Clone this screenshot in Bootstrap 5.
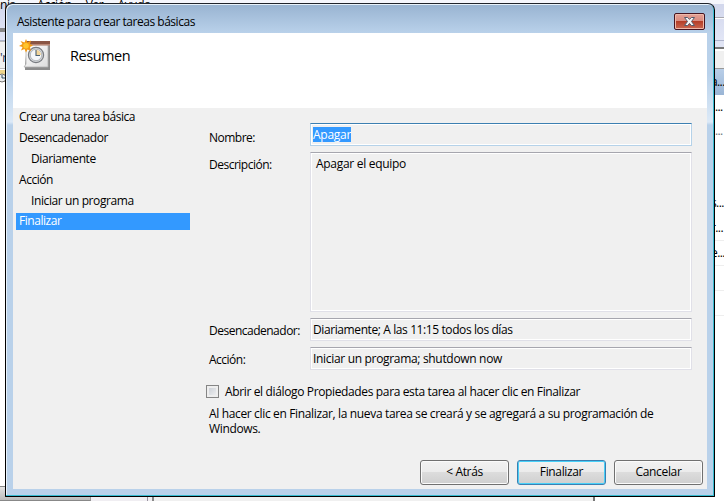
<!DOCTYPE html>
<html lang="es">
<head>
<meta charset="utf-8">
<meta name="viewport" content="width=device-width, initial-scale=1">
<title>Asistente para crear tareas básicas</title>
<link href="https://cdn.jsdelivr.net/npm/bootstrap@5.3.0/dist/css/bootstrap.min.css" rel="stylesheet">
<style>
body{width:724px;height:501px;font-family:"Open Sans","Noto Sans",sans-serif;font-size:12px;line-height:16px;letter-spacing:-.35px;color:#000;background:#fff}
.desktop{width:724px;height:501px}
.back-menu{height:4px;background:#f5f6fc;gap:14px}
.back-menu span{line-height:16px;margin-top:-3px;height:16px}
.back-tools{height:37px;background:linear-gradient(#d2d7ec,#e2e6f6);border-bottom:1px solid #aeb4cc}
.back-left{left:0;top:41px;width:5px;height:460px}
.back-left .lbl{height:28px;background:#f0f0f0;border-top:1px solid #bbb;border-bottom:1px solid #bbb;padding-top:8px;color:#203050}
.grip{left:0;top:28px;width:6px;height:4px;background:#888}
.ridge{left:715px;top:17px;width:9px;height:2px;background:#a8a8b0;border-bottom:1px solid #fff}
.back-right{left:715px;top:41px;width:9px;height:460px}
.back-right .hd{height:28px;background:#f0f0f0;border-bottom:1px solid #999;box-shadow:inset 0 6px #e0e4f4,inset 0 8px #777,inset 0 10px #fff}
.back-right .sel{height:26px;background:linear-gradient(#b8cee8,#9ab5d5);padding-top:5px}
.back-right .rw{height:25px;padding-top:4px}
.back-right .short{height:24px}
.back-right .line{border-bottom:1px solid #eee}
.back-right div{letter-spacing:-.6px;text-indent:-4px}
.back-right .dots{text-indent:0}
.back-foot{left:0;top:486px;width:724px;height:15px;background:#f0eef2}
.back-foot .bar{width:91px;background:linear-gradient(#e3e3e3,#bbb);border-top:1px solid #888;border-right:1px solid #999;border-bottom:1px solid #888}
.back-foot .mid{width:57px;border-right:1px solid #99939f}
.back-foot .mid2{width:6px;border-right:2px solid #888}
.back-foot .mid3{width:441px;border-right:2px solid #777;background:#f0f0f0}
.back-foot .rest{background:#fff}
.wizard{left:5px;top:3px;width:710px;height:494px;border:1px solid #000;border-top-color:#20242c;border-radius:7px 7px 1px 1px;background:linear-gradient(#98b3d1 0,#b9d1ea 29px,#b9d1ea 70px,#dce9f7 118px,#b9d1ea 121px);box-shadow:inset -1px -1px #37bbd0,inset 1px 1px #e8f2fb;padding:0 7px 7px 7px}
.caption{height:29px;padding:9px 1px 0 4px}
.caption span{letter-spacing:-.47px;margin-top:1px}
.closer{width:31px;height:17px;border:1px solid #461420;border-radius:2px;box-shadow:inset 0 0 0 1px #efb9aa;background:linear-gradient(#e5a196 0,#da8c80 45%,#b53e28 50%,#ca6851 100%);margin-right:1px}
.banner{height:75px;background:#fff;padding:6px 0 0 6px}
.banner h1{font-size:14.5px;font-weight:400;line-height:20px;letter-spacing:-.45px;margin:7px 0 0 17px}
.sheet{height:381px;background:#f0f0f0}
.steps{width:177px;padding:0 0 0 3px}
.steps div{height:17px;line-height:17px;margin-bottom:4px;padding-left:3px;letter-spacing:-.45px}
.steps .deep{padding-left:15px;letter-spacing:-.4px}
.steps .on{background:#39f;color:#fff;line-height:16px}
.details{width:498px;margin-left:19px;padding-top:15px}
.entry{margin-bottom:6px}
.field-label{width:101px;padding-top:5px;letter-spacing:-.5px}
.field-label.low{padding-top:7px}
.field{width:382px;height:23px;border:1px solid #e0e0e8;border-top-color:#a6a6ae;box-shadow:inset 0 0 0 1px #fff;padding:2px 0 0 2px;line-height:17px;letter-spacing:-.4px}
.field.hot{border-color:#b5d2e9;border-top-color:#3c7fb1}
.field.hot span{background:#39f;color:#fff;height:15px;line-height:15px;letter-spacing:-.25px}
.field.tall{height:160px;padding-left:5px;letter-spacing:-.3px}
.field.wide{letter-spacing:-.32px}
.check-row{margin:15px 0 0 -3px;gap:6px;line-height:14px;letter-spacing:-.36px}
.tick{width:13px;height:13px;border:1px solid #858585;background:linear-gradient(135deg,#c4c9d1,#f5f5f5);box-shadow:inset 0 0 0 2px #eee}
.note{margin-top:7px;line-height:15px;letter-spacing:-.35px}
.actions{margin-top:24px;padding-right:4px}
.btn.win{width:89px;height:25px;padding:0 0 1px;border:1px solid #707070;border-radius:3px;background:linear-gradient(#f2f2f2 0,#ebebeb 49%,#dcdcdc 50%,#cfcfcf);box-shadow:inset 0 0 0 1px #fbfbfb;font-size:12px;line-height:22px;color:#000;letter-spacing:-.35px}
.btn.win.go{border-color:#3c7fb1;box-shadow:inset 0 0 0 1px #48d0f8}
</style>
</head>
<body class="overflow-hidden">
<div class="desktop position-relative overflow-hidden">
  <div class="back-menu d-flex"><span>nis</span><span class="ms-2">Acción</span><span>Ver</span><span>Ayuda</span></div>
  <div class="back-tools"></div>
  <div class="grip position-absolute"></div>
  <div class="ridge position-absolute"></div>
  <div class="back-left position-absolute overflow-hidden"><div class="lbl">'r</div>
    <svg width="5" height="14" viewBox="0 0 5 14" class="d-block"><path d="M0 1H5V13H0Z" fill="#eed58c"/><circle cx="2" cy="9" r="4" fill="#eee" stroke="#777"/><path d="M2 6V9H5" fill="none" stroke="#356"/></svg></div>
  <div class="back-right position-absolute overflow-hidden">
    <div class="hd"></div><div class="sel">a...</div><div class="rw short dots">...</div><div class="rw short dots text-secondary">...</div><div class="rw short"></div><div class="rw short"></div><div class="rw">s...</div><div class="rw line">r...</div><div class="rw line">e...</div><div class="rw line"></div><div class="rw line"></div>
  </div>
  <div class="back-foot position-absolute d-flex"><div class="bar"></div><div class="mid"></div><div class="mid2"></div><div class="mid3"></div><div class="rest flex-grow-1"></div></div>

  <main class="wizard position-absolute">
    <header class="caption d-flex justify-content-between"><span>Asistente para crear tareas básicas</span>
      <div class="closer d-flex justify-content-center align-items-center"><svg width="13" height="11" viewBox="0 0 13 11"><path d="M1.5 1.5H4.7L6.5 3.4 8.3 1.5H11.5L8.5 5.5 11.5 9.5H8.3L6.5 7.4 4.7 9.5H1.5L4.5 5.5Z" fill="#f5f5f5" stroke="#565b6b"/></svg></div>
    </header>
    <section class="banner d-flex">
      <svg width="34" height="34" viewBox="0 0 34 34">
        <defs><linearGradient id="paper" x2="1" y2="1"><stop stop-color="#fff"/><stop offset="1" stop-color="#ddd"/></linearGradient></defs>
        <path d="M8 5H31V31H6V27Z" fill="#8c8c8c"/><path d="M7 6H29V28H5L7 25Z" fill="url(#paper)" stroke="#b0b0b0" stroke-width=".8"/><path d="M8 2H31V6H8Z" fill="#8a5544"/><path d="M8 5H31V6.5H8Z" fill="#b98775"/>
        <circle cx="17" cy="16" r="7.6" fill="#d3d6d9" stroke="#787b80" stroke-width="1.2"/><circle cx="17" cy="16" r="5.7" fill="#f5f8fa" stroke="#a2a6aa" stroke-width=".7"/><path d="M17 11A5 5 0 0 1 22 16H17Z" fill="#f1d59a"/><path d="M17 11V16.5H21" fill="none" stroke="#4b6275" stroke-width="1.1"/>
        <path d="M7 0L8.5 3.5 12 1.5 11 5 14 6.5 11 8 12 12 8.5 10.5 7 13.5 5.5 10 2 11.5 3.5 8 0 7 3.5 5 1.5 2 5.5 3.5Z" fill="#f39a13"/><circle cx="7" cy="6.7" r="2.8" fill="#ffc52d"/>
      </svg>
      <h1>Resumen</h1>
    </section>
    <section class="sheet d-flex">
      <nav class="steps"><div>Crear una tarea básica</div><div>Desencadenador</div><div class="deep">Diariamente</div><div>Acción</div><div class="deep">Iniciar un programa</div><div class="on">Finalizar</div></nav>
      <div class="details">
        <div class="entry d-flex"><div class="field-label low">Nombre:</div><div class="field hot"><span class="d-inline-block">Apagar</span></div></div>
        <div class="entry d-flex"><div class="field-label">Descripción:</div><div class="field tall">Apagar el equipo</div></div>
        <div class="entry d-flex"><div class="field-label">Desencadenador:</div><div class="field">Diariamente; A las 11:15 todos los días</div></div>
        <div class="d-flex"><div class="field-label">Acción:</div><div class="field wide">Iniciar un programa; shutdown now</div></div>
        <label class="check-row d-flex"><span class="tick"></span><span>Abrir el diálogo Propiedades para esta tarea al hacer clic en Finalizar</span></label>
        <p class="note mb-0">Al hacer clic en Finalizar, la nueva tarea se creará y se agregará a su programación de<br>Windows.</p>
        <footer class="actions d-flex justify-content-end gap-2"><button class="btn win">&lt; Atrás</button><button class="btn win go">Finalizar</button><button class="btn win">Cancelar</button></footer>
      </div>
    </section>
  </main>
</div>
<script src="https://cdn.jsdelivr.net/npm/bootstrap@5.3.0/dist/js/bootstrap.bundle.min.js"></script>
</body>
</html>
